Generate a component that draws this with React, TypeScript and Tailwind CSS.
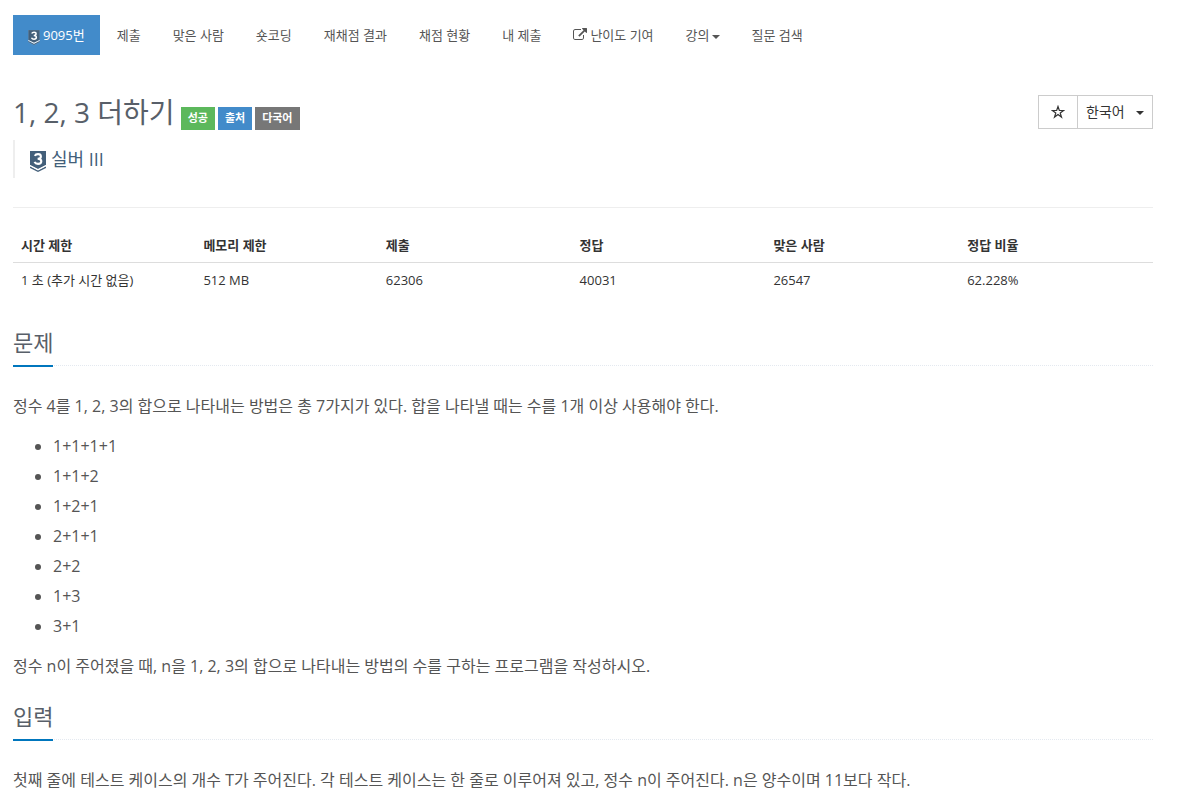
import type { ReactNode } from "react";

function TierBadge({ className, outline = false }: { className: string; outline?: boolean }) {
  return (
    <svg
      viewBox="0 0 16 21"
      role="img"
      aria-label="실버 III"
      className={className}
      stroke={outline ? "#ffffff" : "none"}
      strokeOpacity={0.3}
      strokeWidth={0.5}
    >
      <path fill="#435f7a" d="M0 0h16v14l-8 4.2L0 14z" />
      <path fill="#435f7a" d="M0 15.2l8 4.2 8-4.2v1.7L8 21l-8-4.1z" />
      <path fill="#ffffff" stroke="none" d="M0 14l8 4 8-4v1.2l-8 4-8-4z" />
      <path
        fill="none"
        stroke="#ffffff"
        strokeOpacity={1}
        strokeWidth={2.1}
        d="M4.8 4.9C5.4 3.6 6.6 3.1 8 3.1c1.8 0 2.9.9 2.9 2.3 0 1.5-1.2 2.3-3.3 2.3 2.4 0 3.7.9 3.7 2.6 0 1.6-1.3 2.6-3.3 2.6-1.7 0-2.9-.7-3.5-2"
      />
    </svg>
  );
}

function ExternalLinkIcon() {
  return (
    <svg viewBox="0 0 1792 1792" aria-hidden="true" className="mr-[3px] h-3.5 w-3.5" fill="currentColor">
      <path d="M1408 928v320q0 119-84.5 203.5t-203.5 84.5h-832q-119 0-203.5-84.5t-84.5-203.5v-832q0-119 84.5-203.5t203.5-84.5h704q14 0 23 9t9 23v64q0 14-9 23t-23 9h-704q-66 0-113 47t-47 113v832q0 66 47 113t113 47h832q66 0 113-47t47-113v-320q0-14 9-23t23-9h64q14 0 23 9t9 23zm384-864v512q0 26-19 45t-45 19-45-19l-176-176-652 652q-10 10-23 10t-23-10l-114-114q-10-10-10-23t10-23l652-652-176-176q-19-19-19-45t19-45 45-19h512q26 0 45 19t19 45z" />
    </svg>
  );
}

function Caret({ className = "" }: { className?: string }) {
  return (
    <svg viewBox="0 0 8 4" aria-hidden="true" className={`h-1 w-2 ${className}`} fill="currentColor">
      <path d="M0 0h8L4 4z" />
    </svg>
  );
}

const navItems: { key: string; content: ReactNode }[] = [
  { key: "submit", content: "제출" },
  { key: "solvers", content: "맞은 사람" },
  { key: "short", content: "숏코딩" },
  { key: "rejudge", content: "재채점 결과" },
  { key: "status", content: "채점 현황" },
  { key: "mine", content: "내 제출" },
  { key: "level", content: <><ExternalLinkIcon />난이도 기여</> },
  { key: "lecture", content: <>강의<Caret className="mt-1 ml-0.5" /></> },
  { key: "board", content: "질문 검색" },
];

const stats = [
  ["시간 제한", "1 초 (추가 시간 없음)", "w-[16%]"],
  ["메모리 제한", "512 MB", "w-[16%]"],
  ["제출", "62306", "w-[17%]"],
  ["정답", "40031", "w-[17%]"],
  ["맞은 사람", "26547", "w-[17%]"],
  ["정답 비율", "62.228%", "w-[17%]"],
];

const labels = [
  ["성공", "bg-[#5cb85c]"],
  ["출처", "bg-[#428bca]"],
  ["다국어", "bg-[#777777]"],
];

const examples = ["1+1+1+1", "1+1+2", "1+2+1", "2+1+1", "2+2", "1+3", "3+1"];

function Section({ title, className, children }: { title: string; className: string; children: ReactNode }) {
  return (
    <section className={className}>
      <div className="mb-[25px] flex border-b border-dotted border-[#e4e9f0]">
        <h2 className="-mb-0.5 border-b-2 border-[#0076bd] pb-1.5 text-[22px] leading-[33px] text-[#585f69]">
          {title}
        </h2>
      </div>
      <div className="text-base leading-[30px] text-[#555555]">{children}</div>
    </section>
  );
}

export default function App() {
  return (
    <main className="bg-white pt-[15px] pr-[45px] pl-[13px] font-['Open_Sans','Noto_Sans_CJK_KR',sans-serif] text-[13px] text-[#333333]">
      <nav>
        <ul className="flex gap-0.5 leading-5">
          <li>
            <a href="#problem" className="flex h-10 items-center bg-[#428bca] px-[15px] text-white">
              <TierBadge outline className="mt-1 mr-[3px] h-[15px] w-3" />
              9095번
            </a>
          </li>
          {navItems.map((item) => (
            <li key={item.key}>
              <a href={`#${item.key}`} className="flex h-10 items-center px-[15px] text-[#555555]">
                {item.content}
              </a>
            </li>
          ))}
        </ul>
      </nav>

      <header id="problem" className="mt-10 flex items-start justify-between border-b border-[#eeeeee] pb-[29px]">
        <div>
          <div className="flex items-end">
            <h1 className="text-[28px] leading-[35px] text-[#585f69]">1, 2, 3 더하기</h1>
            <div className="ml-1.5 flex gap-[3px]">
              {labels.map(([text, color]) => (
                <span
                  key={text}
                  className={`flex h-[23px] items-center px-[7px] text-[11px] font-bold text-white ${color}`}
                >
                  {text}
                </span>
              ))}
            </div>
          </div>
          <blockquote className="mt-2.5 flex h-[38px] items-center border-l-2 border-[#eeeeee] pl-[15px] text-lg text-[#435f7a]">
            <TierBadge className="mt-1 mr-[5px] h-[21px] w-4" />
            실버 III
          </blockquote>
        </div>
        <div className="flex h-[34px] border border-[#cccccc] text-sm">
          <button type="button" aria-label="즐겨찾기" className="flex w-[38px] items-center justify-center">
            <svg viewBox="0 0 14 14" className="h-3.5 w-3.5" fill="none" stroke="currentColor" strokeWidth="1.2">
              <path d="M7 1.5l1.35 4h4.25L9.2 8l1.3 4.1L7 9.6l-3.5 2.5L4.8 8 1.4 5.5h4.25z" />
            </svg>
          </button>
          <div className="relative flex border-l border-[#cccccc]">
            <select aria-label="언어" className="w-[74px] appearance-none bg-transparent pl-2">
              <option>한국어</option>
            </select>
            <Caret className="pointer-events-none absolute top-[15px] right-2" />
          </div>
        </div>
      </header>

      <table className="mt-5 w-full table-fixed text-left">
        <thead>
          <tr className="border-b border-[#dddddd]">
            {stats.map(([name, , width]) => (
              <th key={name} className={`p-2 leading-[18px] font-bold ${width}`}>{name}</th>
            ))}
          </tr>
        </thead>
        <tbody>
          <tr>
            {stats.map(([name, value]) => (
              <td key={name} className="p-2 leading-[18px]">{value}</td>
            ))}
          </tr>
        </tbody>
      </table>

      <Section title="문제" className="mt-[29px]">
        <p>정수 4를 1, 2, 3의 합으로 나타내는 방법은 총 7가지가 있다. 합을 나타낼 때는 수를 1개 이상 사용해야 한다.</p>
        <ul className="my-2.5 list-disc pl-10">
          {examples.map((sum) => (
            <li key={sum}>{sum}</li>
          ))}
        </ul>
        <p>정수 n이 주어졌을 때, n을 1, 2, 3의 합으로 나타내는 방법의 수를 구하는 프로그램을 작성하시오.</p>
      </Section>

      <Section title="입력" className="mt-[19px]">
        <p>첫째 줄에 테스트 케이스의 개수 T가 주어진다. 각 테스트 케이스는 한 줄로 이루어져 있고, 정수 n이 주어진다. n은 양수이며 11보다 작다.</p>
      </Section>
    </main>
  );
}
